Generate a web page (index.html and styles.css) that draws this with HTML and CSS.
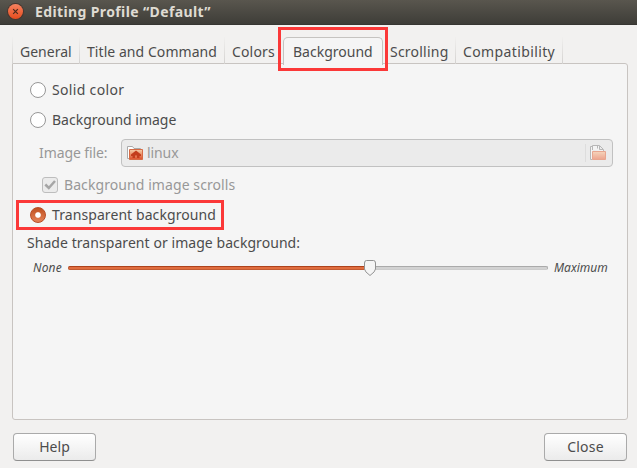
FILE: index.html
```html
<!DOCTYPE html>
<html lang="en">
<head>
<meta charset="utf-8">
<title>Editing Profile “Default”</title>
<link rel="stylesheet" href="styles.css">
</head>
<body>
<div class="window">
  <header class="titlebar">
    <button class="window-close" aria-label="Close window"><svg width="15" height="15" viewBox="0 0 16 16"><path d="M5.500 5.500l5 5M10.500 5.500l-5 5" stroke="#4b2a1c" stroke-width="1.300"/></svg></button>
    <h1>Editing Profile “Default”</h1>
  </header>
  <nav class="tabs">
    <div class="tab general"><span>General</span></div>
    <div class="tab title"><span>Title and Command</span></div>
    <div class="tab colors"><span>Colors</span></div>
    <div class="tab active"><span>Background</span><i class="highlight tab-highlight"></i></div>
    <div class="tab scrolling"><span>Scrolling</span></div>
    <div class="tab compat"><span>Compatibility</span></div>
  </nav>
  <main class="panel">
    <div class="row option"><i class="radio"></i><span class="t-solid">Solid color</span></div>
    <div class="row option"><i class="radio"></i><span class="t-image">Background image</span></div>
    <div class="row file">
      <span class="t-file">Image file:</span>
      <div class="chooser">
        <svg class="home" width="17" height="16" viewBox="0 0 17 16"><path d="M.5 13.500V1.500H5.500L7 3.500H13.500V13.500Z" fill="#fff" stroke="#aaa"/><defs><linearGradient id="hg" x2="0" y2="1"><stop stop-color="#f6cfa9"/><stop offset="1" stop-color="#dc4f29"/></linearGradient></defs><path d="M2.500 4.500H15.500V14.500H2.500Z" fill="url(#hg)" stroke="#d66b45"/><path d="M4 9.500L9 5.500L14 9.500V11H12.500V13H10V10.500H8V13H5.500V11H4Z" fill="#c33d1c"/></svg>
        <span class="t-linux">linux</span>
        <i class="divider"></i>
        <svg class="open" width="17" height="16" viewBox="0 0 17 16"><path d="M2.500 14.500H.5V1.500H2.500M2.500 5V.5H9.500L13.500 4.500V6M7.500 3.500V1M9.500 1V4.500H13" fill="#f4f4f4" stroke="#b7b7b7"/><defs><linearGradient id="og" x2="0" y2="1"><stop stop-color="#f5d5bc"/><stop offset="1" stop-color="#eda48e"/></linearGradient></defs><path d="M2.500 6.500H15.500V14.500H2.500Z" fill="url(#og)" stroke="#e8a68f"/></svg>
      </div>
    </div>
    <div class="row scrolls"><i class="check"><svg width="16" height="16" viewBox="0 0 16 16"><path d="M3.300 7.500l3.500 3.500L13 4" fill="none" stroke="#a5a5a5" stroke-width="2.500"/></svg></i><span class="t-scrolls">Background image scrolls</span></div>
    <div class="row option transparent"><i class="radio on"></i><span class="t-transparent">Transparent background</span><i class="highlight option-highlight"></i></div>
    <div class="row shade"><span class="t-shade">Shade transparent or image background:</span></div>
    <div class="row range">
      <em class="t-none">None</em>
      <div class="track"><div class="fill"></div><svg class="thumb" width="14" height="18" viewBox="0 0 14 18"><path d="M3.500 1.500H10.500Q12.500 1.500 12.500 4V10Q12.500 12.500 7 16.500Q1.500 12.500 1.500 10V4Q1.500 1.500 3.500 1.500Z" fill="#f5f5f5" stroke="#929292"/></svg></div>
      <em class="t-max">Maximum</em>
    </div>
  </main>
  <footer class="actions"><button class="action"><span class="t-help">Help</span></button><button class="action"><span class="t-close">Close</span></button></footer>
</div>
</body>
</html>
```
FILE: styles.css
```css
* { box-sizing: border-box; }
body { margin: 0; font: 14px/20px "Noto Sans", sans-serif; color: #4c4c4c; }
span, em { white-space: nowrap; }
.window { width: 637px; height: 468px; background: #f2f1f0; display: flex; flex-direction: column; overflow: hidden; }
.titlebar { height: 25px; flex: none; display: flex; align-items: center; padding: 0 0 1px 8px; gap: 12px; background: linear-gradient(#59564e, #3e3d38); border-bottom: 1px solid #373632; }
.window-close { width: 15px; height: 15px; padding: 0; border: 0; border-radius: 50%; display: grid; place-items: center; background: linear-gradient(#f68260, #e64c1d); box-shadow: 0 0 0 1px #49362e; }
h1 { margin: 0; font-size: 14px; line-height: 20px; font-weight: 700; color: #dfdbd2; letter-spacing: .38px; }
.tabs { display: flex; height: 39px; padding: 12px 0 0 12px; align-items: stretch; flex: none; }
.tab { position: relative; padding: 5px 0 0 7px; border-right: 1px solid; border-image: linear-gradient(#f2f1f0, #d2d0ce) 1; }
.general { width: 68px; border-left: 1px solid; }
.title { width: 145px; letter-spacing: .06px; }
.colors { width: 58px; border: 0; letter-spacing: .15px; }
.active { width: 100px; height: 28px; padding: 4px 0 0 9px; border: 1px solid #c5c3c0; border-bottom: 0; border-image: none; border-radius: 5px 5px 0 0; background: #f5f5f5; z-index: 1; }
.scrolling { width: 73px; letter-spacing: .22px; }
.compat { width: 107px; letter-spacing: .38px; }
.highlight { position: absolute; border: 3px solid #fb3838; pointer-events: none; }
.tab-highlight { left: -6px; top: -11px; width: 110px; height: 44px; }
.panel { width: 616px; height: 357px; margin: -1px 0 0 12px; flex: none; border: 1px solid #c8c4c1; border-radius: 0 3px 3px 3px; background: #f5f5f5; padding: 11px 0 0 14px; }
.row { display: flex; align-items: center; }
.option { position: relative; height: 30px; gap: 6px; padding-left: 3px; }
.radio { width: 16px; height: 16px; border: 1px solid #979797; border-radius: 50%; background: #fff; }
.radio.on { background: radial-gradient(circle, #fff 0 2.300px, transparent 3.300px), linear-gradient(#c0501f, #e58258); border-color: #b84c25; }
.t-solid { letter-spacing: .33px; }
.file { height: 35px; padding-left: 12px; color: #989898; }
.t-file { width: 82px; letter-spacing: -.1px; }
.chooser { width: 492px; height: 28px; border: 1px solid #c1c1c1; border-radius: 4px; background: #ebebeb; display: flex; align-items: center; padding-left: 5px; }
.t-linux { margin-left: 3px; letter-spacing: -.1px; }
.divider { width: 1px; height: 18px; margin-left: auto; background: #ddd; }
.open { margin: 0 5px 0 4px; }
.scrolls { height: 29px; padding-left: 15px; gap: 6px; color: #989898; }
.check { width: 16px; height: 16px; border: 1px solid #bdbdbd; border-radius: 3px; background: #ebebeb; }
.check svg { display: block; margin: -1px; }
.t-scrolls { letter-spacing: .08px; }
.transparent { height: 32px; }
.t-transparent { letter-spacing: .08px; }
.option-highlight { left: -11px; top: 1px; width: 208px; height: 30px; }
.shade { height: 24px; }
.t-shade { letter-spacing: .06px; }
.range { height: 26px; padding-left: 6px; font-size: 12px; }
.t-none { width: 35px; letter-spacing: .15px; }
.track { position: relative; width: 480px; height: 4px; border: 1px solid #aaa; border-bottom-color: #ccc; border-radius: 2px; background: #d2d2d2; }
.fill { width: 302px; height: 4px; margin: -1px; border: 1px solid #c35b32; border-top-color: #ae431c; border-radius: 2px; background: #e06d3f; }
.thumb { position: absolute; left: 294px; top: -8px; }
.t-max { margin-left: 6px; }
.actions { display: flex; justify-content: space-between; padding: 13px 10px 0 13px; }
.action { width: 83px; height: 28px; padding: 0; border: 1px solid #aaa; border-bottom-color: #8f8f8f; border-radius: 4px; background: linear-gradient(#fff, #ebebeb); font: inherit; color: inherit; }
.t-close { letter-spacing: .2px; }
```
